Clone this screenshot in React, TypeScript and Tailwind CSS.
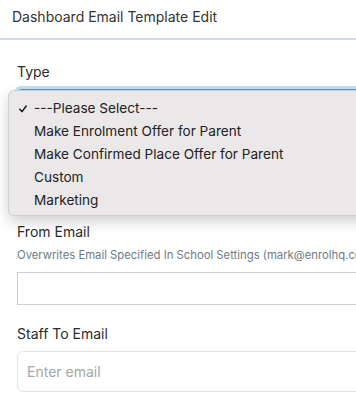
const options = [
  "---Please Select---",
  "Make Enrolment Offer for Parent",
  "Make Confirmed Place Offer for Parent",
  "Custom",
  "Marketing",
];

export default function App() {
  return (
    <div className="relative h-[405px] w-[356px] overflow-hidden bg-white font-['Inter',sans-serif] text-[14px] text-[#2b2b2b]">
      <div className="w-[440px]">
        <div className="h-[40px] border-b-2 border-[#d3dbe0] pl-3 pt-[8px] leading-[18px] text-[#333]">
          Dashboard Email Template Edit
        </div>

        <div className="pl-[17px]">
          <div className="mt-[22px] leading-[20px]">Type</div>
          <div className="mt-[7px] h-[34px] rounded-[4px] border border-[#5a9cc4] bg-white shadow-[0_0_0_3px_#c6e0ee]" />

          <div className="mt-[99px] leading-[20px]">From Email</div>
          <div className="mt-[5px] text-[11.3px] leading-[16px] text-[#6f7b86]">
            Overwrites Email Specified In School Settings (mark@enrolhq.com)
          </div>
          <div className="mt-[9px] h-[33px] border border-[#c9d1d8] bg-white" />

          <div className="mt-[19px] leading-[20px]">Staff To Email</div>
          <div className="mt-[7px] flex h-[41px] items-center rounded-[6px] border border-[#e3e5e8] bg-white px-[9px] text-[#a3a6ab]">
            Enter email
          </div>
        </div>
      </div>

      <div className="absolute left-[8px] top-[90px] w-[400px] rounded-[6px] border border-[#cfcdcd] bg-[#eae8e8] pb-[3px] pt-[6px] shadow-[0_6px_14px_rgba(0,0,0,0.18)]">
        {options.map((o, i) => (
          <div key={o} className="flex h-[23px] items-center text-[13.6px] text-[#222]">
            <span className="flex w-[25px] shrink-0 items-center justify-start pl-[10px]">
              {i === 0 && (
                <svg width="8" height="8" viewBox="0 0 8 8" fill="none">
                  <path d="M0.8 4.2 L3 6.6 L7.2 1" stroke="#1a1a1a" strokeWidth="1.5" strokeLinecap="round" strokeLinejoin="round" />
                </svg>
              )}
            </span>
            <span>{o}</span>
          </div>
        ))}
      </div>
    </div>
  );
}
